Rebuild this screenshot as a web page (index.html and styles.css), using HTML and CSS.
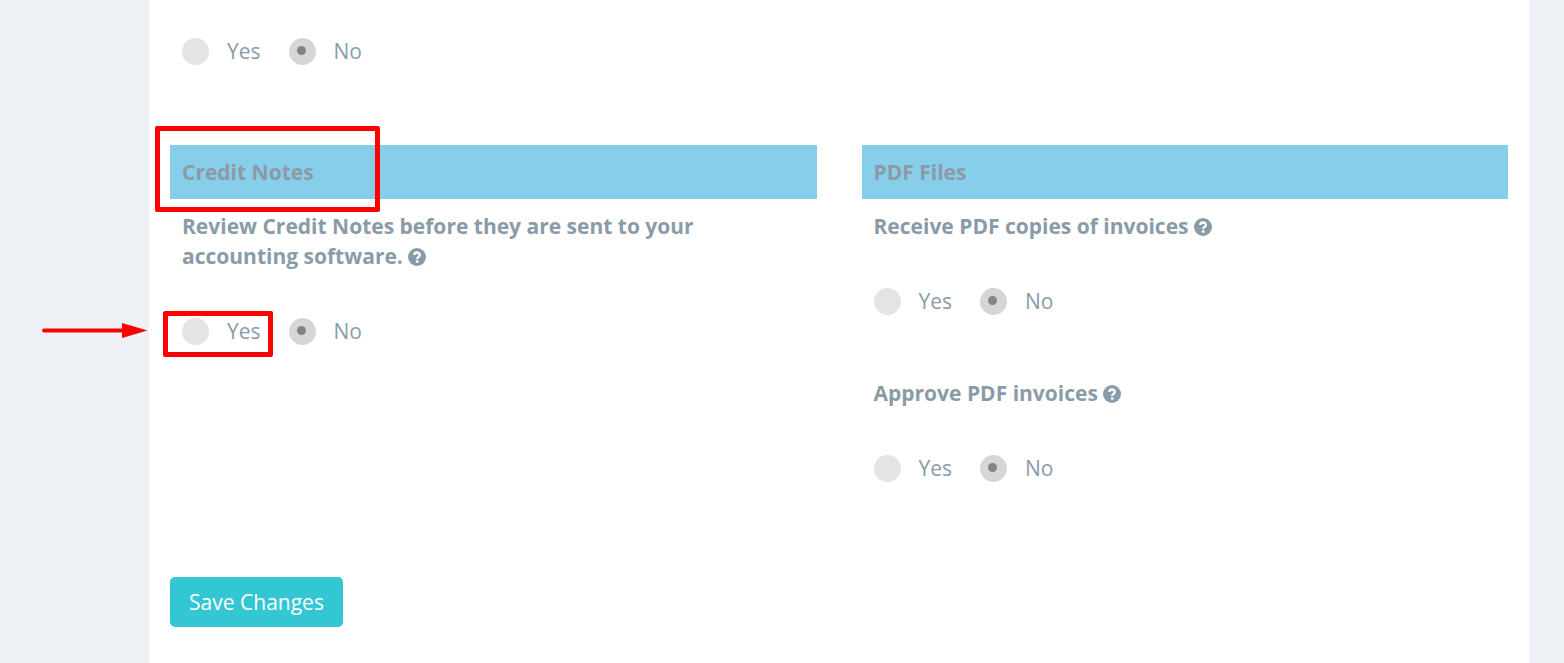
FILE: index.html
```html
<!DOCTYPE html>
<html lang="en">

<head>
    <meta charset="UTF-8">
    <meta name="viewport" content="width=device-width, initial-scale=1.0">
    <title>Settings</title>
    <link rel="stylesheet" href="styles.css">
</head>

<body>
    <div class="panel">
        <div class="radios first">
            <span class="radio"></span><span class="radio-label">Yes</span>
            <span class="radio on"></span><span class="radio-label">No</span>
        </div>

        <div class="cols">
            <div class="col">
                <h3 class="col-title">Credit Notes</h3>
                <p class="question">Review Credit Notes before they are sent to your accounting software.
                    <svg class="help" viewBox="0 0 18 18"><circle cx="9" cy="9" r="9" /><path d="M6.3 7.1c0-3.4 5.5-3.4 5.500-.2 0 2-2.600 2-2.600 4" /><rect x="7.900" y="12.300" width="2.600" height="2.400" /></svg>
                </p>
                <div class="radios">
                    <span class="radio"></span><span class="radio-label">Yes</span>
                    <span class="radio on"></span><span class="radio-label">No</span>
                </div>
            </div>
            <div class="col">
                <h3 class="col-title">PDF Files</h3>
                <p class="question">Receive PDF copies of invoices
                    <svg class="help" viewBox="0 0 18 18"><circle cx="9" cy="9" r="9" /><path d="M6.3 7.1c0-3.4 5.5-3.4 5.500-.2 0 2-2.600 2-2.600 4" /><rect x="7.900" y="12.300" width="2.600" height="2.400" /></svg>
                </p>
                <div class="radios">
                    <span class="radio"></span><span class="radio-label">Yes</span>
                    <span class="radio on"></span><span class="radio-label">No</span>
                </div>
                <p class="question next">Approve PDF invoices
                    <svg class="help" viewBox="0 0 18 18"><circle cx="9" cy="9" r="9" /><path d="M6.3 7.1c0-3.4 5.5-3.4 5.500-.2 0 2-2.600 2-2.600 4" /><rect x="7.900" y="12.300" width="2.600" height="2.400" /></svg>
                </p>
                <div class="radios">
                    <span class="radio"></span><span class="radio-label">Yes</span>
                    <span class="radio on"></span><span class="radio-label">No</span>
                </div>
            </div>
        </div>

        <button class="save">Save Changes</button>
    </div>

    <!-- red annotations drawn on top of the screenshot -->
    <div class="mark mark-title"></div>
    <div class="mark mark-yes"></div>
    <svg class="arrow" width="110" height="20" viewBox="0 0 110 20">
        <path d="M2 9.500H82" />
        <polygon points="80,2 105.500,9.500 80,17" />
    </svg>
</body>

</html>
```

FILE: styles.css
```css
* {
    box-sizing: border-box;
}

html,
body {
    margin: 0;
    height: 100%;
    overflow: hidden;
}

body {
    position: relative;
    background: #eef2f7;
    font-family: "Open Sans", sans-serif;
    color: #8a9ba8;
}

.panel {
    width: 1380px;
    height: 663px;
    margin-left: 149px;
    padding: 38px 21px 0;
    background: #fff;
}

.radios {
    display: flex;
    align-items: center;
    height: 27px;
    margin-top: 47px;
    padding-left: 12px;
}

.radios.first {
    margin-top: 0;
    margin-bottom: 80px;
}

.radio {
    width: 27px;
    height: 27px;
    border-radius: 50%;
    background: #e4e4e4;
    position: relative;
}

.radio.on {
    background: #d6d6d6;
}

.radio.on::after {
    content: "";
    position: absolute;
    left: 8px;
    top: 8px;
    width: 9px;
    height: 9px;
    border-radius: 50%;
    background: #848484;
}

.radio-label {
    margin-left: 18px;
    margin-right: 28px;
    padding-bottom: 2px;
    font-size: 21px;
    line-height: 26px;
}

.cols {
    display: flex;
    gap: 45px;
}

.col {
    flex: 1;
}

.col-title {
    height: 54px;
    margin: 0 0 12px;
    padding-left: 12px;
    background: #87ceeb;
    color: #8d9aa6;
    font-size: 21px;
    font-weight: 700;
    line-height: 54px;
}

.question {
    margin: 0;
    padding: 0 12px;
    font-size: 21px;
    font-weight: 700;
    line-height: 30px;
    max-width: 560px;
}

.question.next {
    margin-top: 63px;
}

.help {
    width: 18px;
    height: 18px;
    vertical-align: -2px;
}

.help circle {
    fill: #8a9ba8;
}

.help path {
    fill: none;
    stroke: #fff;
    stroke-width: 2.4;
}

.help rect {
    fill: #fff;
}

.save {
    display: block;
    width: 173px;
    height: 50px;
    margin-top: 95px;
    border: 0;
    border-radius: 5px;
    background: #33c6d3;
    color: #fff;
    font-family: inherit;
    font-size: 21px;
}

.mark {
    position: absolute;
    border: 5px solid #f00;
    border-radius: 2px;
}

.mark-title {
    left: 155px;
    top: 126px;
    width: 225px;
    height: 86px;
}

.mark-yes {
    left: 163px;
    top: 311px;
    width: 110px;
    height: 46px;
}

.arrow {
    position: absolute;
    left: 42px;
    top: 321px;
}

.arrow path {
    stroke: #f00;
    stroke-width: 4;
    stroke-linecap: round;
}

.arrow polygon {
    fill: #f00;
}
```
